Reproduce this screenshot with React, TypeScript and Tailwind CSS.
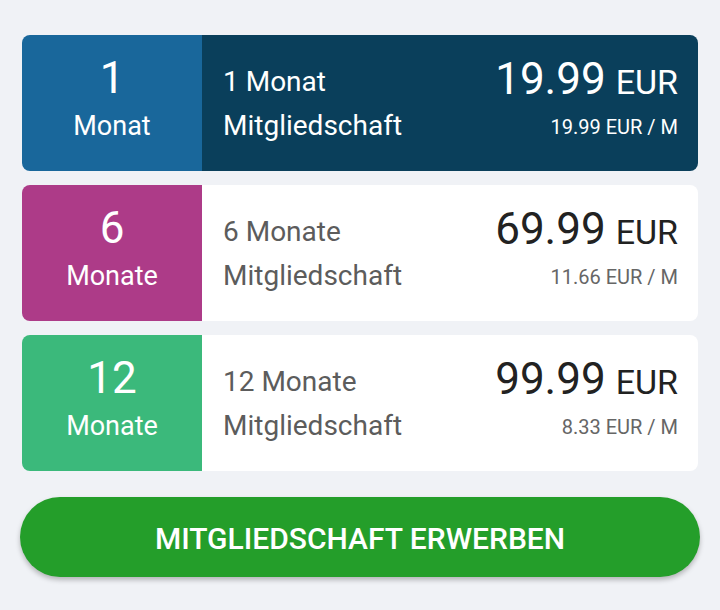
const plans = [
  {
    n: "1",
    unit: "Monat",
    title: "1 Monat",
    price: "19.99",
    perMonth: "19.99 EUR / M",
    left: "bg-[#19679b]",
    right: "bg-[#0a3f5b]",
    titleColor: "text-white",
    priceColor: "text-white",
    subColor: "text-white",
  },
  {
    n: "6",
    unit: "Monate",
    title: "6 Monate",
    price: "69.99",
    perMonth: "11.66 EUR / M",
    left: "bg-[#ad3b88]",
    right: "bg-white",
    titleColor: "text-[#5c5c5c]",
    priceColor: "text-[#222222]",
    subColor: "text-[#666666]",
  },
  {
    n: "12",
    unit: "Monate",
    title: "12 Monate",
    price: "99.99",
    perMonth: "8.33 EUR / M",
    left: "bg-[#3bb97b]",
    right: "bg-white",
    titleColor: "text-[#5c5c5c]",
    priceColor: "text-[#222222]",
    subColor: "text-[#666666]",
  },
];

export default function App() {
  return (
    <main className="w-[720px] h-[610px] bg-[#f0f2f6] pt-[35px] font-['Roboto',sans-serif]">
      <div className="mx-[22px] flex flex-col gap-[14px]">
        {plans.map((p) => (
          <div key={p.n} className="flex h-[136px] rounded-[8px] overflow-hidden">
            <div className={`${p.left} w-[180px] flex flex-col items-center justify-center text-white`}>
              <div className="text-[44px] leading-[48px] mt-[-10px]">{p.n}</div>
              <div className="text-[27px] leading-[32px] mt-[8px]">{p.unit}</div>
            </div>
            <div className={`${p.right} flex-1 flex items-center justify-between pl-[21px] pr-[20px]`}>
              <div className={`${p.titleColor} text-[28px] leading-[44px] mt-[2px]`}>
                <div>{p.title}</div>
                <div>Mitgliedschaft</div>
              </div>
              <div className="flex flex-col items-end mt-[-13px]">
                <div className={`${p.priceColor} leading-[52px] flex items-baseline`}>
                  <span className="text-[44px]">{p.price}</span>
                  <span className="text-[34px] ml-[10px]">EUR</span>
                </div>
                <div className={`${p.subColor} text-[20px] leading-[26px] mt-[6px]`}>{p.perMonth}</div>
              </div>
            </div>
          </div>
        ))}
      </div>
      <div className="mx-[20px] mt-[26px]">
        <button className="w-full h-[80px] rounded-full bg-[#249e2a] text-white text-[30px] font-medium pt-[2px] shadow-[0_3px_5px_rgba(0,0,0,0.25)]">
          MITGLIEDSCHAFT ERWERBEN
        </button>
      </div>
    </main>
  );
}
